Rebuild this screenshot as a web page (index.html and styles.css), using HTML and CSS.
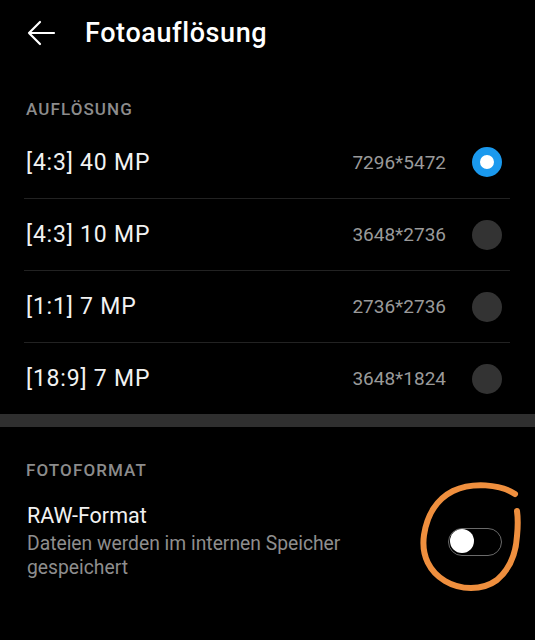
FILE: index.html
```html
<!DOCTYPE html>
<html lang="de">
<head>
<meta charset="utf-8">
<link rel="stylesheet" href="styles.css">
</head>
<body>
<div class="screen">
  <header class="topbar">
    <svg class="back" width="30" height="26" viewBox="0 0 30 26">
      <path d="M28 13H3M14 2L3 13l11 11" fill="none" stroke="#fff" stroke-width="2.2" stroke-linecap="round" stroke-linejoin="round"/>
    </svg>
    <h1 class="title">Fotoauflösung</h1>
  </header>

  <div class="section-label first">AUFLÖSUNG</div>
  <ul class="list">
    <li class="row"><span class="name">[4:3] 40 MP</span><span class="res">7296*5472</span><span class="radio on"></span></li>
    <li class="row"><span class="name">[4:3] 10 MP</span><span class="res">3648*2736</span><span class="radio"></span></li>
    <li class="row"><span class="name">[1:1] 7 MP</span><span class="res">2736*2736</span><span class="radio"></span></li>
    <li class="row"><span class="name">[18:9] 7 MP</span><span class="res">3648*1824</span><span class="radio"></span></li>
  </ul>
  <div class="bar"></div>

  <div class="section-label second">FOTOFORMAT</div>
  <div class="setting">
    <div class="setting-text">
      <div class="setting-title">RAW-Format</div>
      <div class="setting-sub">Dateien werden im internen Speicher gespeichert</div>
    </div>
    <span class="toggle"><span class="knob"></span></span>
  </div>

  <svg class="mark" width="535" height="640" viewBox="0 0 535 640">
    <path d="M515 494 C500 484 472 482 453 491 C437 499 427 515 424 535 C421 556 430 572 445 581 C460 590 482 591 497 580 C510 569 516 552 517 536 C518 526 518 518 517 511" fill="none" stroke="#ef8f3e" stroke-width="6" stroke-linecap="round" stroke-linejoin="round"/>
  </svg>
</div>
</body>
</html>
```
FILE: styles.css
```css
html, body {
  margin: 0;
  padding: 0;
  background: #000;
}
.screen {
  position: relative;
  width: 535px;
  height: 640px;
  overflow: hidden;
  background: #000;
  color: #fff;
  font-family: Roboto, "Liberation Sans", sans-serif;
}
.topbar {
  height: 66px;
  display: flex;
  align-items: center;
  padding-left: 26px;
}
.back {
  display: block;
}
.title {
  margin: 0 0 0 29px;
  font-family: Roboto, "Liberation Sans", sans-serif;
  font-weight: 500;
  font-size: 27px;
  letter-spacing: 0.6px;
  color: #fff;
}
.section-label {
  font-family: Roboto, "Liberation Sans", sans-serif;
  font-weight: 500;
  font-size: 17px;
  color: #8c8c8c;
  padding-left: 26px;
  letter-spacing: 1.1px;
}
.section-label.first {
  margin-top: 32px;
  height: 28px;
  line-height: 22px;
}
.list {
  list-style: none;
  margin: 0 25px 0 24px;
  padding: 0;
}
.row {
  height: 72px;
  display: flex;
  align-items: center;
  padding-left: 2px;
  box-sizing: border-box;
  border-top: 1px solid #222;
}
.row:first-child {
  border-top: none;
}
.name {
  flex: 1;
  font-family: Roboto, "Liberation Sans", sans-serif;
  font-weight: 400;
  font-size: 23px;
  letter-spacing: 0.8px;
  color: #f2f2f2;
}
.res {
  font-size: 19px;
  color: #9a9a9a;
  margin-right: 26px;
}
.radio {
  width: 30px;
  height: 30px;
  border-radius: 50%;
  background: #333;
  margin-right: 8px;
  box-sizing: border-box;
}
.radio.on {
  background: #fff;
  border: 8px solid #1a99ee;
}
.bar {
  height: 13px;
  background: #2f2f2f;
}
.section-label.second {
  margin-top: 32px;
  line-height: 22px;
}
.setting {
  display: flex;
  align-items: center;
  padding: 22px 33px 0 27px;
}
.setting-text {
  flex: 1;
}
.setting-title {
  font-size: 21.5px;
  line-height: 26px;
  color: #f2f2f2;
}
.setting-sub {
  font-size: 19.3px;
  line-height: 24px;
  color: #8e8e8e;
  width: 350px;
  margin-top: 3px;
}
.toggle {
  position: relative;
  width: 54px;
  height: 28px;
  border: 1.5px solid #6a6a6a;
  border-radius: 15px;
  box-sizing: border-box;
  margin-top: 0;
}
.knob {
  position: absolute;
  left: 1px;
  top: 0.5px;
  width: 24px;
  height: 24px;
  border-radius: 50%;
  background: #fff;
}
.mark {
  position: absolute;
  left: 0;
  top: 0;
  pointer-events: none;
}
```
